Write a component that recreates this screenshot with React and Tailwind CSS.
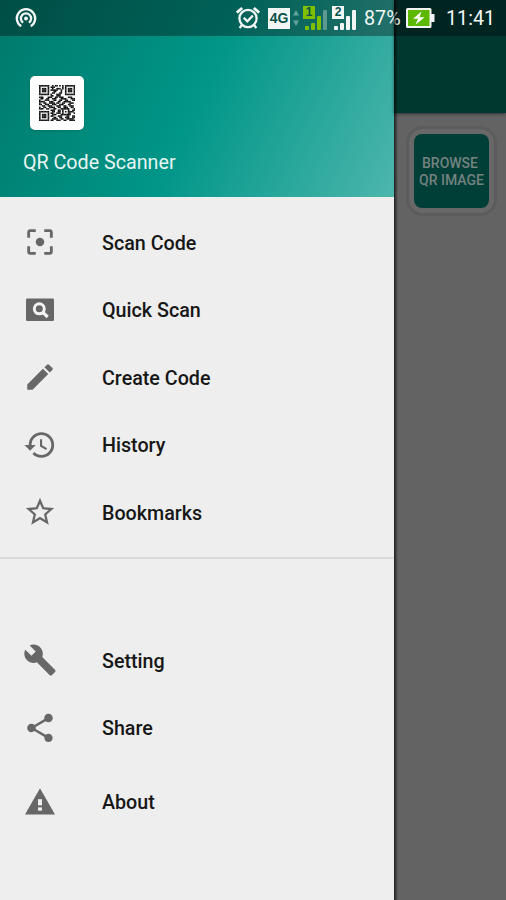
import React from "react";
import {
  MdBuild,
  MdCreate,
  MdFilterCenterFocus,
  MdHistory,
  MdShare,
  MdStarBorder,
} from "react-icons/md";

const PageviewIcon = ({ className }) => (
  <svg className={className} viewBox="0 0 34 34" fill="none" aria-hidden="true">
    <rect x="3" y="5.5" width="28" height="22.5" rx="1.2" fill="currentColor" />
    <circle cx="16.3" cy="15.8" r="5" stroke="#f4f4f4" strokeWidth="3" />
    <path d="m19.8 19.3 4.9 4.7" stroke="#f4f4f4" strokeWidth="3.2" />
  </svg>
);

const WarningIcon = ({ className }) => (
  <svg className={className} viewBox="0 0 34 34" aria-hidden="true">
    <path d="M17 3.2 32 29.6H2z" fill="currentColor" />
    <rect x="15" y="14.2" width="4" height="6.2" fill="#eeeeee" />
    <rect x="15" y="22.4" width="4" height="3.2" fill="#eeeeee" />
  </svg>
);

const mainItems = [
  { label: "Scan Code", icon: MdFilterCenterFocus },
  { label: "Quick Scan", icon: PageviewIcon },
  { label: "Create Code", icon: MdCreate },
  { label: "History", icon: MdHistory },
  { label: "Bookmarks", icon: MdStarBorder },
];

const QR_ROWS = [
  "1111111001011010101111111",
  "1000001011100000101000001",
  "1011101001001110101011101",
  "1011101011111001001011101",
  "1011101000110001001011101",
  "1000001001100011001000001",
  "1111111010001110001111111",
  "0000000011001110000000000",
  "1110001110011011100011100",
  "0110011001110001111000111",
  "1000111000110011001100011",
  "1111000111000110011111000",
  "1001100111101100110001110",
  "1100111001110011100011000",
  "0011001110001110011001110",
  "1001100111100110011100110",
  "1110011000110001111110001",
  "0000000011100110100010011",
  "1111111001100110101011110",
  "1000001011001110100011001",
  "1011101001110001111111000",
  "1011101011000111000110011",
  "1011101000110011001110011",
  "1000001001111001100111110",
  "1111111011001110011001111",
];

const QrCode = () => (
  <svg className="w-9 h-9" viewBox="0 0 25 25" aria-hidden="true">
    {QR_ROWS.map((row, y) =>
      row
        .split("")
        .map((cell, x) =>
          cell === "1" ? (
            <rect key={`${x}-${y}`} x={x} y={y} width="1.1" height="1.1" fill="#111" />
          ) : null
        )
    )}
  </svg>
);

const HotspotIcon = () => (
  <svg
    className="w-[22px] h-[22px]"
    viewBox="0 0 22 22"
    fill="none"
    stroke="currentColor"
    strokeWidth="2.3"
    aria-hidden="true"
  >
    <path d="M6.2 19.2a9.2 9.2 0 1 1 9.6 0" />
    <path d="M8.1 15.6a5.1 5.1 0 1 1 5.8 0" />
    <circle cx="11" cy="11.6" r="2" fill="currentColor" stroke="none" />
  </svg>
);

const AlarmIcon = () => (
  <svg
    className="w-[26px] h-[26px]"
    viewBox="0 0 26 26"
    fill="none"
    stroke="currentColor"
    strokeWidth="2.3"
    aria-hidden="true"
  >
    <circle cx="13" cy="13.5" r="8.6" />
    <path d="M1.8 7.6 7.2 3M24.2 7.6 18.8 3" strokeWidth="2.8" />
    <path d="M6.8 20.2 4.6 23M19.2 20.2l2.2 2.8" />
    <path d="m8.8 12.8 3.5 3.6 5.6-5.8" />
  </svg>
);

const SignalIcon = ({ sim, active }) => (
  <div className="relative w-[25px] h-[25px]">
    <svg className="w-[25px] h-[25px]" viewBox="0 0 25 25" aria-hidden="true">
      <g fill={active ? "#7fc000" : "#f2f7f6"}>
        <rect x="2" y="20" width="4" height="4" rx="1" />
        <rect x="8" y="17" width="4" height="7" rx="1" />
        <rect x="14" y="10" width="4" height="14" rx="1" />
        <rect
          x="20"
          y="4"
          width="4"
          height="20"
          rx="1"
          fill={active ? "#5a9a91" : "#f2f7f6"}
        />
      </g>
    </svg>
    <span
      className={`absolute left-0 top-0 w-3 h-[13px] flex items-center justify-center text-[12px] leading-none font-bold text-[#0b5147] font-['Liberation_Sans',sans-serif] ${
        active ? "bg-[#7fc000]" : "bg-[#f2f7f6]"
      }`}
    >
      {sim}
    </span>
  </div>
);

const BatteryIcon = () => (
  <svg className="w-[29px] h-5" viewBox="0 0 29 20" aria-hidden="true">
    <rect x="1" y="1" width="23.5" height="18" rx="0.5" fill="#5cb800" stroke="#f1f4f3" strokeWidth="2" />
    <rect x="25" y="6" width="3.5" height="8" fill="#f1f4f3" />
    <path d="M15.5 3.5 7 10.8h5l-2.5 6 9-7.6h-5z" fill="#fff" />
  </svg>
);

const StatusBar = () => (
  <div className="absolute inset-x-0 top-0 h-9 flex items-center bg-black/35 text-[#f2f7f6] pl-[15px] pr-3">
    <HotspotIcon />
    <div className="ml-auto flex items-center">
      <AlarmIcon />
      <span className="ml-[7px] w-[22px] h-[21px] flex items-center justify-center bg-[#f2f7f6] text-[#0b5147] text-[14px] leading-none font-bold font-['Liberation_Sans',sans-serif]">
        4G
      </span>
      <svg className="ml-[3px] w-[6px] h-4" viewBox="0 0 6 16" fill="#62a49c" aria-hidden="true">
        <path d="M3 0 6 5.5H0zM3 16l3-5.5H0z" />
      </svg>
      <div className="ml-1 flex gap-1">
        <SignalIcon sim="1" active />
        <SignalIcon sim="2" />
      </div>
      <span className="ml-[7px] w-[37px] pt-[2px] text-[19.7px] leading-none whitespace-nowrap">
        87%
      </span>
      <div className="ml-[5px]">
        <BatteryIcon />
      </div>
      <span className="ml-[11px] w-12 pt-[2px] text-[19.7px] leading-none">11:41</span>
    </div>
  </div>
);

const MenuItem = ({ icon: Icon, label }) => (
  <button type="button" className="w-full h-[67.5px] pl-[23px] flex items-center text-left">
    <Icon className="w-[34px] h-[34px] text-[#676767]" />
    <span className="ml-[45px] pt-[3px] text-[19.7px] font-medium text-[#171717]">{label}</span>
  </button>
);

const Drawer = () => (
  <aside className="w-[394px] shrink-0 flex flex-col bg-[#eeeeee]">
    <header className="h-[197px] pl-[23px] pt-[76px] bg-[linear-gradient(115deg,#00796b_0%,#009688_50%,#4db6ac_100%)]">
      <div className="ml-[7px] w-[54px] h-[54px] flex items-center justify-center rounded-[5px] bg-white shadow-sm">
        <QrCode />
      </div>
      <h1 className="mt-[19px] text-[19.7px] leading-7 text-[#e8f5f3]">QR Code Scanner</h1>
    </header>

    <nav className="pt-[11.5px]">
      {mainItems.map((item) => (
        <MenuItem key={item.label} icon={item.icon} label={item.label} />
      ))}
      <div className="mt-[11px] pt-[67.5px] border-t-2 border-[#d9d9d9]">
        <MenuItem icon={MdBuild} label="Setting" />
        <MenuItem icon={MdShare} label="Share" />
        <div className="pt-[6.5px]">
          <MenuItem icon={WarningIcon} label="About" />
        </div>
      </div>
    </nav>
  </aside>
);

// The page behind the drawer, already dimmed by the scrim.
const DimmedPage = () => (
  <main className="flex-1 flex bg-[#636363]">
    <div className="w-1 shrink-0 bg-linear-to-r from-black/70 to-transparent -mr-1 z-10" />
    <div className="flex-1">
      <div className="h-[113px] bg-[#003830] shadow-[0_1px_3px_rgba(0,0,0,0.5)]" />
      <div className="ml-[12px] mt-[13px] w-[91px] h-[90px] rounded-[17px] border-[3px] border-[#5c5c5c] bg-[#686868] p-[5px]">
        <button
          type="button"
          className="w-[75px] h-[74px] pt-px rounded-[8px] bg-[#003f37] text-[14px] leading-[17px] font-medium text-[#748280] whitespace-nowrap"
        >
          <span className="mr-[3px]">BROWSE</span>
          <br />
          QR IMAGE
        </button>
      </div>
    </div>
  </main>
);

const App = () => {
  return (
    <div className="relative w-[506px] h-[900px] flex overflow-hidden font-[Roboto,sans-serif]">
      <Drawer />
      <DimmedPage />
      <StatusBar />
    </div>
  );
};

export default App;
